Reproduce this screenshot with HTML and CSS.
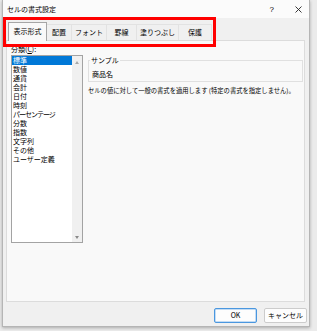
FILE: index.html
```html
<!DOCTYPE html>
<html lang="ja">
<head>
<meta charset="utf-8">
<title>セルの書式設定</title>
<link rel="stylesheet" href="styles.css">
</head>
<body>
<div class="dialog">
  <div class="titlebar">
    <span class="title">セルの書式設定</span>
    <span class="help">?</span>
    <span class="close"><svg width="7" height="7" viewBox="0 0 7 7"><path d="M0.5 0.5L6.5 6.5M6.5 0.5L0.5 6.5" stroke="#222" stroke-width="0.9" fill="none"/></svg></span>
  </div>
  <div class="tabs">
    <div class="tab active tab-1">表示形式</div>
    <div class="tab tab-2">配置</div>
    <div class="tab tab-3">フォント</div>
    <div class="tab tab-4">罫線</div>
    <div class="tab tab-5">塗りつぶし</div>
    <div class="tab tab-6">保護</div>
  </div>
  <div class="panel">
    <div class="left">
      <div class="cat-label">分類(<u>C</u>):</div>
      <div class="listbox">
        <ul class="items">
          <li class="selected">標準</li>
          <li>数値</li>
          <li>通貨</li>
          <li>会計</li>
          <li>日付</li>
          <li>時刻</li>
          <li class="narrow">パーセンテージ</li>
          <li>分数</li>
          <li>指数</li>
          <li>文字列</li>
          <li>その他</li>
          <li>ユーザー定義</li>
        </ul>
        <div class="scrollbar">
          <span class="arrow up"></span>
          <span class="arrow down"></span>
        </div>
      </div>
    </div>
    <div class="right">
      <fieldset class="sample">
        <legend>サンプル</legend>
        <div class="sample-value">商品名</div>
      </fieldset>
      <p class="desc">セルの値に対して一般の書式を適用します (特定の書式を指定しません)。</p>
    </div>
  </div>
  <div class="footer">
    <button class="btn default">OK</button>
    <button class="btn">キャンセル</button>
  </div>
  <div class="highlight"></div>
</div>
</body>
</html>
```
FILE: styles.css
```css
html, body {
  margin: 0;
  padding: 0;
}
body {
  width: 317px;
  height: 331px;
  overflow: hidden;
  background: #ebebeb;
  font-family: "Noto Sans CJK JP", "Noto Sans", sans-serif;
  color: #000;
}
.dialog {
  position: relative;
  margin-left: 2px;
  width: 306px;
  height: 326px;
  border: 1px solid #b5b5b5;
  border-top: none;
  background: #f0f0f0;
  box-shadow: 0 1px 3px rgba(0, 0, 0, 0.28);
  display: flex;
  flex-direction: column;
}
.titlebar {
  height: 18px;
  flex: none;
  background: #fbfbfb;
  display: flex;
  align-items: center;
  padding-left: 4px;
  font-size: 7px;
  line-height: 9px;
}
.title {
  flex: 1;
  padding-top: 1px;
}
.help {
  font-family: "Liberation Sans", sans-serif;
  font-size: 8px;
  margin-right: 21px;
  padding-top: 1px;
}
.close svg {
  display: block;
  margin-right: 7px;
}
.tabs {
  height: 22px;
  flex: none;
  display: flex;
  align-items: flex-end;
  padding-left: 5px;
  font-size: 7px;
  line-height: 9px;
}
.tab {
  box-sizing: border-box;
  height: 16px;
  display: flex;
  align-items: center;
  justify-content: center;
  border: 1px solid #e2e2e2;
  border-left: none;
  border-bottom: none;
  background: #f0f0f0;
}
.tab.active {
  position: relative;
  z-index: 1;
  height: 19px;
  margin-bottom: -1px;
  border: 1px solid #a6a6a6;
  border-bottom: none;
  background: #f9f9f9;
  padding-bottom: 1px;
}
.tab-1 { width: 39px; }
.tab-2 { width: 25px; }
.tab-3 { width: 35px; }
.tab-4 { width: 30px; }
.tab-5 { width: 42px; }
.tab-6 { width: 33px; }
.panel {
  box-sizing: border-box;
  height: 262px;
  flex: none;
  margin: 0 4px 0 3px;
  border: 1px solid #dcdcdc;
  background: #f9f9f9;
  padding: 4px 1px 0 4px;
  display: grid;
  grid-template-columns: 72px 1fr;
  column-gap: 5px;
  align-items: start;
  font-size: 7px;
  line-height: 9px;
}
.cat-label {
  height: 9px;
}
.cat-label u {
  text-decoration-thickness: 0.6px;
}
.listbox {
  box-sizing: border-box;
  height: 188px;
  margin-top: 1px;
  border: 1px solid #a3a3a3;
  background: #fff;
  display: flex;
}
.items {
  flex: 1;
  list-style: none;
  margin: 0;
  padding: 0;
}
.items li {
  height: 9px;
  padding-left: 1px;
  white-space: nowrap;
}
.items li.narrow {
  letter-spacing: -1px;
}
.items li.selected {
  background: #0078d7;
  color: #fff;
}
.scrollbar {
  width: 10px;
  background: #f0f0f0;
  display: flex;
  flex-direction: column;
  justify-content: space-between;
  align-items: center;
  padding: 5px 0 3px;
}
.arrow {
  width: 0;
  height: 0;
  border-left: 2.5px solid transparent;
  border-right: 2.5px solid transparent;
}
.arrow.up {
  border-bottom: 3px solid #a8a8a8;
}
.arrow.down {
  border-top: 3px solid #8a8a8a;
}
.right {
  margin-top: 11px;
}
.sample {
  margin: 0;
  padding: 0 2px 2px 3px;
  border: 1px solid #e0e0e0;
  min-width: 0;
}
.sample legend {
  padding: 0 1px;
  margin-left: -2px;
  line-height: 9px;
}
.sample-value {
  margin-top: 5px;
  height: 9px;
}
.desc {
  margin: 4px 0 0;
  font-size: 6.3px;
  line-height: 9px;
  white-space: nowrap;
}
.footer {
  flex: 1;
  display: flex;
  justify-content: flex-end;
  align-items: flex-start;
  gap: 7px;
  padding: 6px 2px 0 0;
}
.btn {
  box-sizing: border-box;
  width: 43px;
  height: 15px;
  margin: 0;
  padding: 0;
  border: 1px solid #cccccc;
  border-radius: 2px;
  background: #fdfdfd;
  font-family: "Noto Sans CJK JP", "Noto Sans", sans-serif;
  font-size: 7px;
  line-height: 9px;
  color: #000;
}
.btn.default {
  border-color: #4a97df;
  box-shadow: inset 0 0 0 0.5px #8cbcec;
}
.highlight {
  position: absolute;
  left: 0;
  top: 17px;
  width: 213px;
  height: 30px;
  box-sizing: border-box;
  border: 3px solid #f00;
  pointer-events: none;
}
```
